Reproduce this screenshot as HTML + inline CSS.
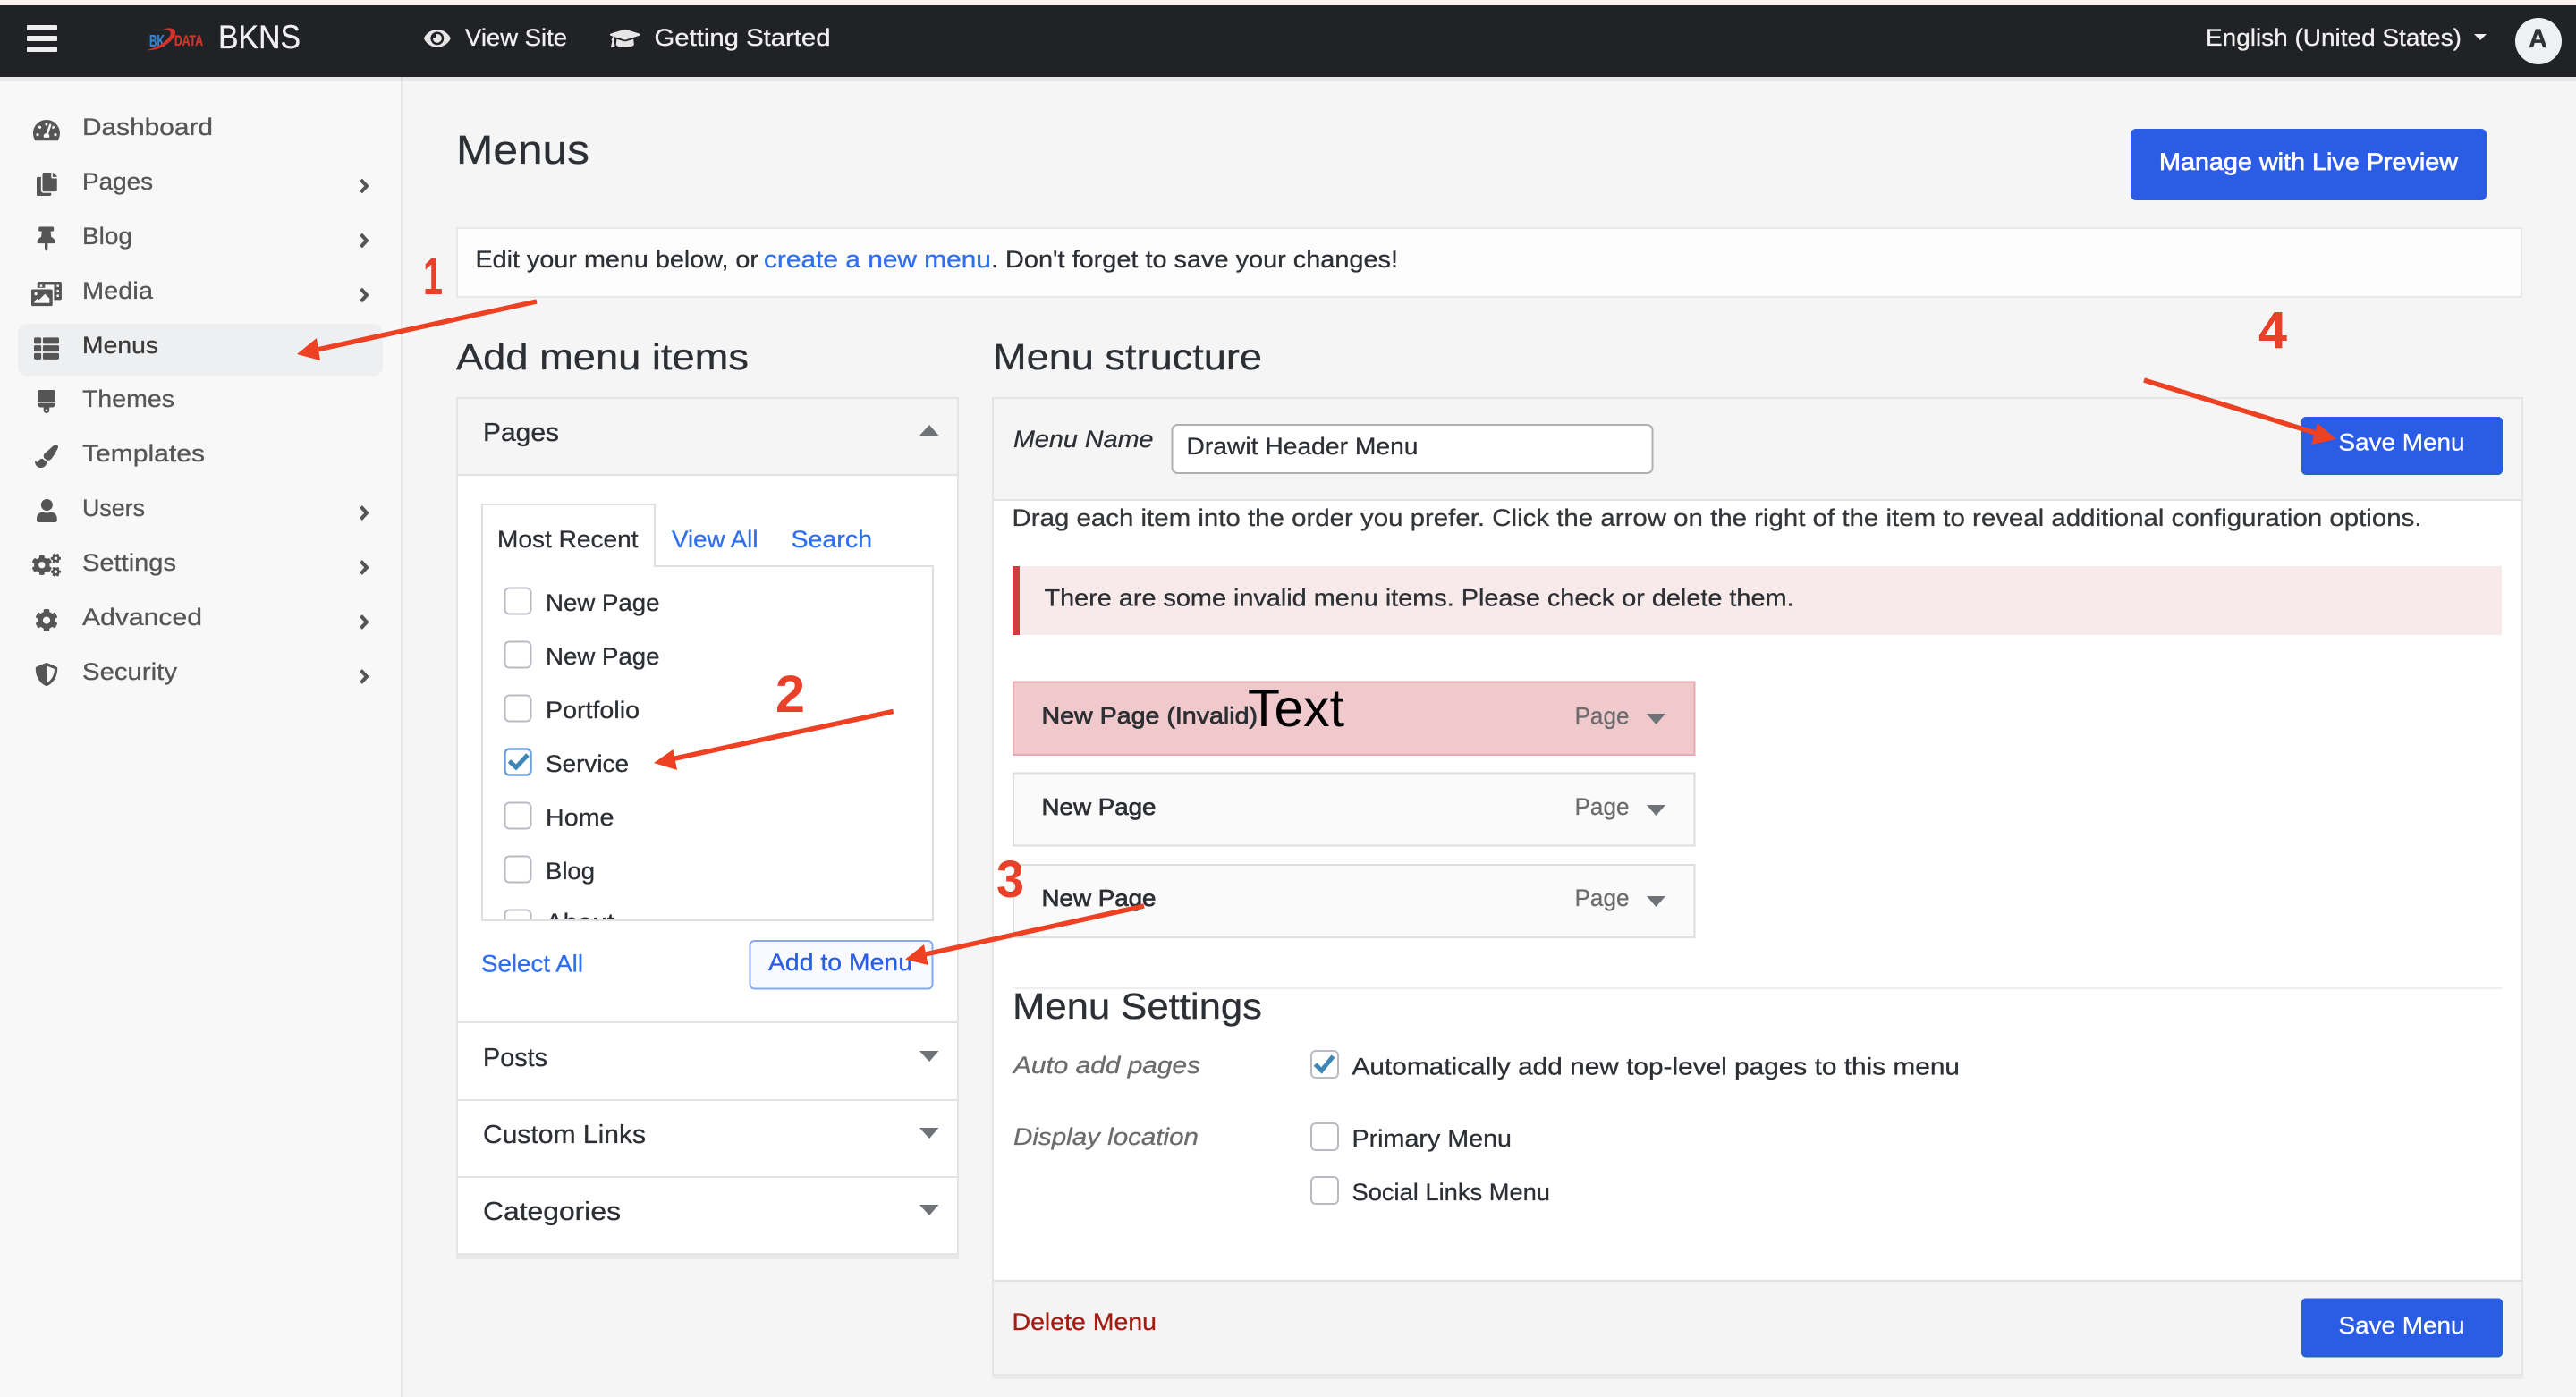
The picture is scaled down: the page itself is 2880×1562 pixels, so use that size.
<!DOCTYPE html>
<html lang="en"><head><meta charset="utf-8"><title>Menus</title>
<style>
html,body{margin:0;padding:0;background:#f5f5f5;overflow:hidden}
svg{display:block}
text{font-family:"Liberation Sans",sans-serif;font-size:27px;fill:#2c2f33;stroke:#2c2f33;stroke-width:.3}
.s{fill:#565656;stroke:#565656}
.w{fill:#f0f0f0;stroke:#f0f0f0}
.l{fill:#2f6ff0;stroke:#2f6ff0}
.h{font-size:29px}
.i{font-style:italic}
.g{fill:#6c6c6c;stroke:#6c6c6c}
.b{stroke-width:.7;font-size:26px}
.v{fill:#fff;stroke:#fff}
.r{font-family:"Liberation Sans",sans-serif;font-weight:bold;fill:#e9402a;stroke:none}
</style></head><body>
<svg xmlns="http://www.w3.org/2000/svg" width="2880" height="1562" viewBox="0 0 2880 1562">
<rect width="2880" height="1562" fill="#f5f5f5"/>
<rect x="0" y="0" width="449" height="1562" fill="#f8f8f8"/>
<rect x="448" y="0" width="2" height="1562" fill="#e6e6e6"/>
<!-- top bar -->
<rect width="2880" height="6" fill="#faf1f0"/>
<rect y="86" width="2880" height="5" fill="#000" opacity=".06"/>
<rect y="6" width="2880" height="80" fill="#202225"/>
<rect x="30" y="28" width="34" height="6" rx="1" fill="#eee"/>
<rect x="30" y="40" width="34" height="6" rx="1" fill="#eee"/>
<rect x="30" y="52" width="34" height="6" rx="1" fill="#eee"/>
<!-- logo -->
<text x="167" y="52" textLength="17" lengthAdjust="spacingAndGlyphs" style="font-size:18px;fill:#3a80c8;stroke:#3a80c8;font-weight:bold">BK</text>
<text x="195" y="51" textLength="32" lengthAdjust="spacingAndGlyphs" style="font-size:17px;fill:#d8322a;stroke:#d8322a;font-weight:bold">DATA</text>
<path d="M164 56C178 58 198 44 196 35C194 30 186 31 182 33C190 32 192 36 190 40C186 47 174 54 164 56Z" fill="#d8322a"/>
<text x="244" y="54" textLength="92" lengthAdjust="spacingAndGlyphs" class="w" style="font-size:37px">BKNS</text>
<path transform="translate(474 29.7) scale(.0515)" fill="#e6e6e6" d="M572.52 241.4C518.29 135.59 410.93 64 288 64S57.68 135.64 3.48 241.4a32.35 32.35 0 0 0 0 29.19C57.71 376.41 165.07 448 288 448s230.32-71.64 284.52-177.41a32.35 32.35 0 0 0 0-29.19zM288 400a144 144 0 1 1 144-144 143.93 143.93 0 0 1-144 144zm0-240a95.31 95.31 0 0 0-25.31 3.79 47.85 47.85 0 0 1-66.9 66.9A95.78 95.78 0 1 0 288 160z"/>
<text x="520" y="51" textLength="114" lengthAdjust="spacingAndGlyphs" class="w">View Site</text>
<path transform="translate(682 29.5) scale(.0525)" fill="#e6e6e6" d="M622.34 153.2L343.4 67.5c-15.2-4.67-31.6-4.67-46.79 0L17.66 153.2c-23.54 7.23-23.54 38.36 0 45.59l48.63 14.94c-10.67 13.19-17.23 29.28-17.88 46.9C38.78 266.15 32 276.11 32 288c0 10.78 5.68 19.85 13.86 25.65L20.33 428.53C18.11 438.52 25.71 448 35.94 448h56.11c10.24 0 17.84-9.48 15.62-19.47L82.14 313.65C90.32 307.85 96 298.78 96 288c0-11.57-6.47-21.25-15.66-26.87.76-15.02 8.44-28.3 20.69-36.72L296.6 284.5c9.06 2.78 26.44 6.25 46.79 0l278.95-85.7c23.55-7.24 23.55-38.36 0-45.6zM352.79 315.09c-28.53 8.76-52.84 3.92-65.59 0l-145.02-44.55L128 384c0 35.35 85.96 64 192 64s192-28.65 192-64l-14.18-113.47-145.03 44.56z"/>
<text x="731.5" y="51" textLength="197" lengthAdjust="spacingAndGlyphs" class="w">Getting Started</text>
<text x="2466" y="51" textLength="286" lengthAdjust="spacingAndGlyphs" class="w">English (United States)</text>
<polygon points="2766,38 2780,38 2773,45" fill="#eee"/>
<circle cx="2838" cy="46" r="26" fill="#eef0f2"/>
<text x="2827" y="53" textLength="21" lengthAdjust="spacingAndGlyphs" style="font-size:30px;font-weight:bold;fill:#2f3235">A</text>
<!-- sidebar -->
<rect x="20" y="362" width="408" height="58" rx="10" fill="#eeeff1"/>
<g fill="#555">
<path transform="translate(37 132.3) scale(.052)" d="M288 32C128.94 32 0 160.94 0 320c0 52.8 14.25 102.26 39.06 144.8 5.61 9.62 16.3 15.2 27.44 15.2h443c11.14 0 21.83-5.58 27.44-15.2C561.75 422.26 576 372.8 576 320c0-159.06-128.94-288-288-288zm0 64c14.71 0 26.58 10.13 30.32 23.65-1.11 2.26-2.64 4.23-3.45 6.67l-9.22 27.67c-5.13 3.49-10.97 6.01-17.64 6.01-17.67 0-32-14.33-32-32S270.33 96 288 96zM96 384c-17.67 0-32-14.33-32-32s14.33-32 32-32 32 14.33 32 32-14.33 32-32 32zm48-160c-17.67 0-32-14.33-32-32s14.33-32 32-32 32 14.33 32 32-14.33 32-32 32zm246.77-72.41l-61.33 184C343.13 347.33 352 364.54 352 384c0 11.72-3.38 22.55-8.88 32H232.88c-5.5-9.45-8.88-20.28-8.88-32 0-33.94 26.5-61.43 59.9-63.59l61.34-184.01c4.17-12.56 17.73-19.45 30.36-15.17 12.57 4.19 19.35 17.79 15.17 30.36zm14.66 57.2l15.52-46.55c3.47-1.29 7.13-2.23 11.05-2.23 17.67 0 32 14.33 32 32s-14.33 32-32 32c-11.38-.01-20.89-6.28-26.57-15.22zM480 384c-17.67 0-32-14.33-32-32s14.33-32 32-32 32 14.33 32 32-14.33 32-32 32z"/>
<path transform="translate(41 193) scale(.0508)" d="M320 448v40c0 13.255-10.745 24-24 24H24c-13.255 0-24-10.745-24-24V120c0-13.255 10.745-24 24-24h72v296c0 30.879 25.121 56 56 56h168zm0-344V0H152c-13.255 0-24 10.745-24 24v368c0 13.255 10.745 24 24 24h272c13.255 0 24-10.745 24-24V128H344c-13.2 0-24-10.8-24-24zm120.971-31.029L375.029 7.029A24 24 0 0 0 358.059 0H352v96h96v-6.059a24 24 0 0 0-7.029-16.97z"/>
<path transform="translate(41.5 253.5) scale(.053)" d="M298.028 214.267L285.793 96H328c13.255 0 24-10.745 24-24V24c0-13.255-10.745-24-24-24H56C42.745 0 32 10.745 32 24v48c0 13.255 10.745 24 24 24h42.207L85.972 214.267C37.465 236.82 0 277.261 0 328c0 13.255 10.745 24 24 24h136v104.007c0 1.242.289 2.467.845 3.578l24 48c2.941 5.882 11.364 5.893 14.311 0l24-48a8.008 8.008 0 0 0 .845-3.578V352h136c13.255 0 24-10.745 24-24-.001-51.183-37.983-91.42-85.973-113.733z"/>
<path transform="translate(35 315) scale(.053)" d="M608 0H160a32 32 0 0 0-32 32v96h160V64h192v320h128a32 32 0 0 0 32-32V32a32 32 0 0 0-32-32zM232 103a9 9 0 0 1-9 9h-30a9 9 0 0 1-9-9V73a9 9 0 0 1 9-9h30a9 9 0 0 1 9 9zm352 208a9 9 0 0 1-9 9h-30a9 9 0 0 1-9-9v-30a9 9 0 0 1 9-9h30a9 9 0 0 1 9 9zm0-104a9 9 0 0 1-9 9h-30a9 9 0 0 1-9-9v-30a9 9 0 0 1 9-9h30a9 9 0 0 1 9 9zm0-104a9 9 0 0 1-9 9h-30a9 9 0 0 1-9-9V73a9 9 0 0 1 9-9h30a9 9 0 0 1 9 9zm-168 57H32a32 32 0 0 0-32 32v288a32 32 0 0 0 32 32h384a32 32 0 0 0 32-32V192a32 32 0 0 0-32-32zM96 224a32 32 0 1 1-32 32 32 32 0 0 1 32-32zm288 224H64v-32l64-64 32 32 128-128 96 96z"/>
<path transform="translate(38 375.6) scale(.0547)" d="M149.333 216v80c0 13.255-10.745 24-24 24H24c-13.255 0-24-10.745-24-24v-80c0-13.255 10.745-24 24-24h101.333c13.255 0 24 10.745 24 24zM0 376v80c0 13.255 10.745 24 24 24h101.333c13.255 0 24-10.745 24-24v-80c0-13.255-10.745-24-24-24H24c-13.255 0-24 10.745-24 24zM125.333 32H24C10.745 32 0 42.745 0 56v80c0 13.255 10.745 24 24 24h101.333c13.255 0 24-10.745 24-24V56c0-13.255-10.745-24-24-24zm80 448H488c13.255 0 24-10.745 24-24v-80c0-13.255-10.745-24-24-24H205.333c-13.255 0-24 10.745-24 24v80c0 13.255 10.745 24 24 24zm-24-424v80c0 13.255 10.745 24 24 24H488c13.255 0 24-10.745 24-24V56c0-13.255-10.745-24-24-24H205.333c-13.255 0-24 10.745-24 24zm24 264H488c13.255 0 24-10.745 24-24v-80c0-13.255-10.745-24-24-24H205.333c-13.255 0-24 10.745-24 24v80c0 13.255 10.745 24 24 24z"/>
<path transform="translate(42.2 436) scale(.0508)" d="M352 0H32C14.33 0 0 14.33 0 32v224h384V32c0-17.67-14.33-32-32-32zM0 320c0 35.35 28.66 64 64 64h64v64c0 35.35 28.66 64 64 64s64-28.65 64-64v-64h64c35.34 0 64-28.65 64-64v-32H0v32zm192 104c13.25 0 24 10.74 24 24 0 13.25-10.75 24-24 24s-24-10.75-24-24c0-13.26 10.75-24 24-24z"/>
<path transform="translate(39 497) scale(.0508)" d="M167.02 309.34c-40.12 2.58-76.53 17.86-97.19 72.3-2.35 6.21-8 9.98-14.59 9.98-11.11 0-45.46-27.67-55.25-34.35C0 439.62 37.93 512 128 512c75.86 0 128-43.77 128-120.19 0-3.11-.65-6.08-.97-9.13l-88.01-73.34zM457.89 0c-15.16 0-29.37 6.71-40.21 16.45C213.27 199.05 192 203.34 192 257.09c0 13.7 3.25 26.76 8.73 38.7l63.82 53.18c7.21 1.8 14.64 3.03 22.39 3.03 62.11 0 98.11-45.47 211.16-256.46 7.38-14.35 13.9-29.85 13.9-45.99C512 20.64 486 0 457.89 0z"/>
<path transform="translate(41 558) scale(.0508)" d="M224 256c70.7 0 128-57.3 128-128S294.7 0 224 0 96 57.3 96 128s57.3 128 128 128zm89.6 32h-16.7c-22.2 10.2-46.9 16-72.9 16s-50.6-5.8-72.9-16h-16.7C60.2 288 0 348.2 0 422.4V464c0 26.5 21.5 48 48 48h352c26.5 0 48-21.5 48-48v-41.6c0-74.2-60.2-134.4-134.4-134.4z"/>
<path transform="translate(36 619) scale(.05)" d="M512.1 191l-8.2 14.3c-3 5.3-9.4 7.5-15.1 5.4-11.8-4.4-22.6-10.7-32.1-18.6-4.6-3.8-5.8-10.5-2.8-15.7l8.2-14.3c-6.9-8-12.3-17.3-15.9-27.4h-16.5c-6 0-11.2-4.3-12.2-10.3-2-12-2.1-24.6 0-37.1 1-6 6.2-10.4 12.2-10.4h16.5c3.6-10.1 9-19.4 15.9-27.4l-8.2-14.3c-3-5.2-1.9-11.9 2.8-15.7 9.5-7.9 20.4-14.2 32.1-18.6 5.7-2.1 12.1.1 15.1 5.4l8.2 14.3c10.5-1.9 21.2-1.9 31.7 0L552 6.3c3-5.3 9.4-7.5 15.1-5.4 11.8 4.4 22.6 10.7 32.1 18.6 4.6 3.8 5.8 10.5 2.8 15.7l-8.2 14.3c6.9 8 12.3 17.3 15.9 27.4h16.5c6 0 11.2 4.3 12.2 10.3 2 12 2.1 24.6 0 37.1-1 6-6.2 10.4-12.2 10.4h-16.5c-3.6 10.1-9 19.4-15.9 27.4l8.2 14.3c3 5.2 1.9 11.9-2.8 15.7-9.5 7.9-20.4 14.2-32.1 18.6-5.7 2.1-12.1-.1-15.1-5.4l-8.2-14.3c-10.4 1.9-21.2 1.9-31.7 0zm-10.5-58.8c38.5 29.6 82.4-14.3 52.8-52.8-38.5-29.7-82.4 14.3-52.8 52.8zM386.3 286.1l33.7 16.8c10.1 5.8 14.5 18.1 10.5 29.1-8.9 24.2-26.4 46.4-42.6 65.8-7.4 8.9-20.2 11.1-30.3 5.3l-29.1-16.8c-16 13.7-34.6 24.6-54.9 31.7v33.6c0 11.6-8.3 21.6-19.7 23.6-24.6 4.2-50.4 4.4-75.9 0-11.5-2-20-11.9-20-23.6V418c-20.3-7.2-38.9-18-54.9-31.7L74 403c-10 5.8-22.9 3.6-30.3-5.3-16.2-19.4-33.3-41.6-42.2-65.7-4-10.9.4-23.2 10.5-29.1l33.3-16.8c-3.9-20.9-3.9-42.4 0-63.4L12 205.8c-10.1-5.8-14.6-18.1-10.5-29 8.9-24.2 26-46.4 42.2-65.8 7.4-8.9 20.2-11.1 30.3-5.3l29.1 16.8c16-13.7 34.6-24.6 54.9-31.7V57.1c0-11.5 8.2-21.5 19.6-23.5 24.6-4.2 50.5-4.4 76-.1 11.5 2 20 11.9 20 23.6v33.6c20.3 7.2 38.9 18 54.9 31.7l29.1-16.8c10-5.8 22.9-3.6 30.3 5.3 16.2 19.4 33.2 41.6 42.1 65.8 4 10.9.1 23.2-10 29.1l-33.7 16.8c3.9 21 3.9 42.5 0 63.5zm-117.6 21.1c59.2-77-28.7-164.9-105.7-105.7-59.2 77 28.7 164.9 105.7 105.7zm243.4 182.7l-8.2 14.3c-3 5.3-9.4 7.5-15.1 5.4-11.8-4.4-22.6-10.7-32.1-18.6-4.6-3.8-5.8-10.5-2.8-15.7l8.2-14.3c-6.9-8-12.3-17.3-15.9-27.4h-16.5c-6 0-11.2-4.3-12.2-10.3-2-12-2.1-24.6 0-37.1 1-6 6.2-10.4 12.2-10.4h16.5c3.6-10.1 9-19.4 15.9-27.4l-8.2-14.3c-3-5.2-1.9-11.9 2.8-15.7 9.5-7.9 20.4-14.2 32.1-18.6 5.7-2.1 12.1.1 15.1 5.4l8.2 14.3c10.5-1.9 21.2-1.9 31.7 0l8.2-14.3c3-5.3 9.4-7.5 15.1-5.4 11.8 4.4 22.6 10.7 32.1 18.6 4.6 3.8 5.8 10.5 2.8 15.7l-8.2 14.3c6.9 8 12.3 17.3 15.9 27.4h16.5c6 0 11.2 4.3 12.2 10.3 2 12 2.1 24.6 0 37.1-1 6-6.2 10.4-12.2 10.4h-16.5c-3.6 10.1-9 19.4-15.9 27.4l8.2 14.3c3 5.2 1.9 11.9-2.8 15.7-9.5 7.9-20.4 14.2-32.1 18.6-5.7 2.1-12.1-.1-15.1-5.4l-8.2-14.3c-10.4 1.9-21.2 1.9-31.7 0zM501.6 431c38.5 29.6 82.4-14.3 52.8-52.8-38.5-29.6-82.4 14.3-52.8 52.8z"/>
<path transform="translate(39 680.5) scale(.0508)" d="M487.4 315.7l-42.6-24.6c4.3-23.2 4.3-47 0-70.2l42.6-24.6c4.9-2.8 7.1-8.6 5.5-14-11.1-35.6-30-67.8-54.7-94.6-3.8-4.1-10-5.1-14.8-2.3L380.8 110c-17.9-15.4-38.5-27.3-60.8-35.1V25.8c0-5.6-3.9-10.5-9.4-11.7-36.7-8.2-74.3-7.8-109.2 0-5.5 1.2-9.4 6.1-9.4 11.7V75c-22.2 7.9-42.8 19.8-60.8 35.1L88.7 85.5c-4.9-2.8-11-1.9-14.8 2.3-24.7 26.7-43.6 58.9-54.7 94.6-1.7 5.4.6 11.2 5.5 14L67.3 221c-4.3 23.2-4.3 47 0 70.2l-42.6 24.6c-4.9 2.8-7.1 8.6-5.5 14 11.1 35.6 30 67.8 54.7 94.6 3.8 4.1 10 5.1 14.8 2.3l42.6-24.6c17.9 15.4 38.5 27.3 60.8 35.1v49.2c0 5.6 3.9 10.5 9.4 11.7 36.7 8.2 74.3 7.8 109.2 0 5.5-1.2 9.4-6.1 9.4-11.7v-49.2c22.2-7.9 42.8-19.8 60.8-35.1l42.6 24.6c4.9 2.8 11 1.9 14.8-2.3 24.7-26.7 43.6-58.9 54.7-94.6 1.5-5.5-.7-11.3-5.6-14.1zM256 336c-44.1 0-80-35.9-80-80s35.9-80 80-80 80 35.9 80 80-35.9 80-80 80z"/>
<path transform="translate(39 741) scale(.0508)" d="M466.5 83.7l-192-80a48.15 48.15 0 0 0-36.9 0l-192 80C27.7 91.1 16 108.6 16 128c0 198.5 114.5 335.7 221.5 380.3 11.8 4.9 25.1 4.9 36.9 0C360.1 472.6 496 349.3 496 128c0-19.4-11.7-36.9-29.5-44.3zM256.1 446.3l-.1-381 175.9 73.3c-3.3 151.4-82.1 261.1-175.8 307.7z"/>
</g>
<text x="92" y="151" textLength="146" lengthAdjust="spacingAndGlyphs" class="s">Dashboard</text>
<text x="92" y="212" textLength="79" lengthAdjust="spacingAndGlyphs" class="s">Pages</text>
<text x="92" y="273" textLength="56" lengthAdjust="spacingAndGlyphs" class="s">Blog</text>
<text x="92" y="334" textLength="79" lengthAdjust="spacingAndGlyphs" class="s">Media</text>
<text x="92" y="395" textLength="85" lengthAdjust="spacingAndGlyphs" style="fill:#3a3a3a;stroke:#3a3a3a">Menus</text>
<text x="92" y="455" textLength="103" lengthAdjust="spacingAndGlyphs" class="s">Themes</text>
<text x="92" y="516" textLength="137" lengthAdjust="spacingAndGlyphs" class="s">Templates</text>
<text x="92" y="577" textLength="70" lengthAdjust="spacingAndGlyphs" class="s">Users</text>
<text x="92" y="638" textLength="105" lengthAdjust="spacingAndGlyphs" class="s">Settings</text>
<text x="92" y="699" textLength="134" lengthAdjust="spacingAndGlyphs" class="s">Advanced</text>
<text x="92" y="760" textLength="106" lengthAdjust="spacingAndGlyphs" class="s">Security</text>
<g fill="none" stroke="#555" stroke-width="4">
<polyline points="403.5,201 410,208 403.5,215"/>
<polyline points="403.5,262 410,269 403.5,276"/>
<polyline points="403.5,323 410,330 403.5,337"/>
<polyline points="403.5,566.5 410,573.5 403.5,580.5"/>
<polyline points="403.5,627.5 410,634.5 403.5,641.5"/>
<polyline points="403.5,688.5 410,695.5 403.5,702.5"/>
<polyline points="403.5,749.5 410,756.5 403.5,763.5"/>
</g>
<!-- heading -->
<text x="510" y="183" textLength="149" lengthAdjust="spacingAndGlyphs" style="font-size:45px">Menus</text>
<rect x="2382" y="144" width="398" height="80" rx="6" fill="#2b5ce6"/>
<text x="2414" y="190" textLength="334" lengthAdjust="spacingAndGlyphs" class="v" style="stroke-width:.7">Manage with Live Preview</text>
<!-- notice -->
<rect x="511" y="255" width="2308" height="77" fill="#fcfcfc" stroke="#e8e8e8" stroke-width="2"/>
<text x="531.5" y="299" textLength="316.5" lengthAdjust="spacingAndGlyphs">Edit your menu below, or</text>
<text x="854" y="299" textLength="254" lengthAdjust="spacingAndGlyphs" class="l">create a new menu</text>
<text x="1108" y="299" textLength="455" lengthAdjust="spacingAndGlyphs">. Don't forget to save your changes!</text>
<text x="510" y="413" textLength="327" lengthAdjust="spacingAndGlyphs" style="font-size:41px">Add menu items</text>
<text x="1110" y="413" textLength="301" lengthAdjust="spacingAndGlyphs" style="font-size:41px">Menu structure</text>
<!-- left panel -->
<rect x="510" y="1402" width="562" height="6" fill="#000" opacity=".05"/>
<rect x="511" y="445" width="560" height="957" fill="#fff" stroke="#e4e4e4" stroke-width="2"/>
<rect x="512" y="446" width="558" height="84" fill="#f5f5f5"/>
<rect x="512" y="530" width="558" height="2" fill="#e4e4e4"/>
<text x="540" y="493" textLength="85" lengthAdjust="spacingAndGlyphs" class="h">Pages</text>
<polygon points="1028,487 1049.5,487 1039,475" fill="#6f7378"/>
<!-- tabs box -->
<rect x="539" y="633" width="504" height="396" fill="#fff" stroke="#e0e0e0" stroke-width="2"/>
<path d="M539 634V564H732V634" fill="#fff" stroke="#e0e0e0" stroke-width="2"/>
<rect x="540" y="630" width="191" height="6" fill="#fff"/>
<text x="556" y="612" textLength="157.5" lengthAdjust="spacingAndGlyphs">Most Recent</text>
<text x="751" y="612" textLength="96.5" lengthAdjust="spacingAndGlyphs" class="l">View All</text>
<text x="884.5" y="612" textLength="90.5" lengthAdjust="spacingAndGlyphs" class="l">Search</text>
<g fill="#fff" stroke="#b8bcc2" stroke-width="2">
<rect x="564.5" y="657.5" width="29" height="29" rx="5"/>
<rect x="564.5" y="717.5" width="29" height="29" rx="5"/>
<rect x="564.5" y="777.5" width="29" height="29" rx="5"/>
<rect x="564.5" y="897.5" width="29" height="29" rx="5"/>
<rect x="564.5" y="957.5" width="29" height="29" rx="5"/>
</g>
<rect x="564.5" y="837.5" width="29" height="29" rx="5" fill="#fff" stroke="#6fa0dc" stroke-width="2.5"/>
<polyline points="569.5,851 577,858 590,844" fill="none" stroke="#3f86b8" stroke-width="5"/>
<text x="610" y="683" textLength="127.5" lengthAdjust="spacingAndGlyphs">New Page</text>
<text x="610" y="743" textLength="127.5" lengthAdjust="spacingAndGlyphs">New Page</text>
<text x="610" y="803" textLength="105" lengthAdjust="spacingAndGlyphs">Portfolio</text>
<text x="610" y="863" textLength="93" lengthAdjust="spacingAndGlyphs">Service</text>
<text x="610" y="923" textLength="76.5" lengthAdjust="spacingAndGlyphs">Home</text>
<text x="610" y="983" textLength="55" lengthAdjust="spacingAndGlyphs">Blog</text>
<svg x="540" y="1000" width="502" height="28" viewBox="540 1000 502 28">
<rect x="564.5" y="1017.5" width="29" height="29" rx="5" fill="#fff" stroke="#b8bcc2" stroke-width="2"/>
<text x="610" y="1040" textLength="77" lengthAdjust="spacingAndGlyphs">About</text>
</svg>
<text x="538" y="1086.5" textLength="114" lengthAdjust="spacingAndGlyphs" class="l">Select All</text>
<rect x="838.5" y="1052" width="204" height="53.5" rx="5" fill="#f8faff" stroke="#86a8ee" stroke-width="2"/>
<text x="859" y="1085" textLength="161" lengthAdjust="spacingAndGlyphs" style="fill:#2b5ce6;stroke:#2b5ce6">Add to Menu</text>
<rect x="512" y="1142" width="558" height="2" fill="#e2e2e2"/>
<rect x="512" y="1229" width="558" height="2" fill="#e2e2e2"/>
<rect x="512" y="1315" width="558" height="2" fill="#e2e2e2"/>
<text x="540" y="1192" textLength="72" lengthAdjust="spacingAndGlyphs" class="h">Posts</text>
<text x="540" y="1278" textLength="182" lengthAdjust="spacingAndGlyphs" class="h">Custom Links</text>
<text x="540" y="1364" textLength="154" lengthAdjust="spacingAndGlyphs" class="h">Categories</text>
<g fill="#6f7378">
<polygon points="1028,1175 1049.5,1175 1039,1187"/>
<polygon points="1028,1261 1049.5,1261 1039,1273"/>
<polygon points="1028,1347 1049.5,1347 1039,1359"/>
</g>
<!-- right panel -->
<rect x="1109" y="1537" width="1712" height="5" fill="#000" opacity=".04"/>
<rect x="1110" y="445" width="1710" height="1092" fill="#fff" stroke="#e6e6e6" stroke-width="2"/>
<rect x="1111" y="446" width="1708" height="112" fill="#f5f5f5"/>
<rect x="1111" y="558" width="1708" height="2" fill="#e2e2e2"/>
<text x="1133" y="500" textLength="156.5" lengthAdjust="spacingAndGlyphs" class="i">Menu Name</text>
<rect x="1310.5" y="475" width="537" height="54" rx="6" fill="#fff" stroke="#b0b0b0" stroke-width="2"/>
<text x="1326.5" y="508" textLength="259" lengthAdjust="spacingAndGlyphs">Drawit Header Menu</text>
<rect x="2573" y="466" width="225" height="65" rx="5" fill="#1f6a9a"/>
<rect x="2573" y="466" width="225" height="63.5" rx="5" fill="#2b5ce6"/>
<text x="2614.5" y="503.5" textLength="141" lengthAdjust="spacingAndGlyphs" class="v">Save Menu</text>
<text x="1131.5" y="588" textLength="1576" lengthAdjust="spacingAndGlyphs" style="fill:#34373a;stroke:#34373a">Drag each item into the order you prefer. Click the arrow on the right of the item to reveal additional configuration options.</text>
<rect x="1132" y="633" width="1665" height="77" fill="#f8e9ea"/>
<rect x="1132" y="633" width="8" height="77" fill="#cf3e3e"/>
<text x="1167.5" y="677.5" textLength="838" lengthAdjust="spacingAndGlyphs">There are some invalid menu items. Please check or delete them.</text>
<rect x="1133" y="762.5" width="761.5" height="81.5" fill="#f0c9cd" stroke="#e8aab0" stroke-width="2"/>
<rect x="1133" y="864.5" width="761.5" height="81" fill="#fafafa" stroke="#dedede" stroke-width="2"/>
<rect x="1133" y="967" width="761.5" height="81" fill="#fafafa" stroke="#dedede" stroke-width="2"/>
<text x="1164.5" y="809" textLength="241.5" lengthAdjust="spacingAndGlyphs" class="b">New Page (Invalid)</text>
<text x="1395" y="812" textLength="108" lengthAdjust="spacingAndGlyphs" style="font-size:59px;fill:#000;stroke:none">Text</text>
<text x="1164.5" y="911" textLength="128" lengthAdjust="spacingAndGlyphs" class="b">New Page</text>
<text x="1164.5" y="1013" textLength="128" lengthAdjust="spacingAndGlyphs" class="b">New Page</text>
<text x="1760.5" y="809.5" textLength="61" lengthAdjust="spacingAndGlyphs" class="g">Page</text>
<text x="1760.5" y="911" textLength="61" lengthAdjust="spacingAndGlyphs" class="g">Page</text>
<text x="1760.5" y="1013" textLength="61" lengthAdjust="spacingAndGlyphs" class="g">Page</text>
<g fill="#6f7378">
<polygon points="1841,798 1862,798 1851.5,810"/>
<polygon points="1841,900 1862,900 1851.5,912"/>
<polygon points="1841,1002 1862,1002 1851.5,1014"/>
</g>
<rect x="1132" y="1104" width="1665" height="2" fill="#eeeeee"/>
<text x="1132" y="1139" textLength="279" lengthAdjust="spacingAndGlyphs" style="font-size:41px">Menu Settings</text>
<text x="1133" y="1200" textLength="209" lengthAdjust="spacingAndGlyphs" class="i g">Auto add pages</text>
<text x="1133" y="1280" textLength="207" lengthAdjust="spacingAndGlyphs" class="i g">Display location</text>
<g fill="#fff" stroke="#b8bcc2" stroke-width="2">
<rect x="1466" y="1175" width="30" height="30" rx="5"/>
<rect x="1466" y="1256" width="30" height="30" rx="5"/>
<rect x="1466" y="1316" width="30" height="30" rx="5"/>
</g>
<polyline points="1470.5,1190 1477.5,1197 1490.5,1181" fill="none" stroke="#3f86b8" stroke-width="5"/>
<text x="1511.5" y="1201.5" textLength="679.5" lengthAdjust="spacingAndGlyphs">Automatically add new top-level pages to this menu</text>
<text x="1511.5" y="1282" textLength="178.5" lengthAdjust="spacingAndGlyphs">Primary Menu</text>
<text x="1511.5" y="1342" textLength="221.5" lengthAdjust="spacingAndGlyphs">Social Links Menu</text>
<rect x="1111" y="1431" width="1708" height="105" fill="#f4f4f4"/>
<rect x="1111" y="1431" width="1708" height="2" fill="#dfdfdf"/>
<text x="1131.5" y="1487" textLength="161.5" lengthAdjust="spacingAndGlyphs" style="fill:#a51b10;stroke:#a51b10">Delete Menu</text>
<rect x="2573" y="1451.5" width="225" height="66" rx="5" fill="#1f6a9a"/>
<rect x="2573" y="1451.5" width="225" height="64.5" rx="5" fill="#2b5ce6"/>
<text x="2614.5" y="1491" textLength="141" lengthAdjust="spacingAndGlyphs" class="v">Save Menu</text>
<!-- annotations -->
<g stroke="#ee4023" stroke-width="5.5" fill="none">
<line x1="600" y1="337" x2="350" y2="392"/>
<line x1="998.7" y1="795.4" x2="750" y2="849"/>
<line x1="1279" y1="1013" x2="1030" y2="1068"/>
<line x1="2397" y1="425" x2="2592" y2="485"/>
</g>
<g fill="#ee4023">
<polygon points="332,396 354,378 358,403"/>
<polygon points="731,853 752.5,838 757,861"/>
<polygon points="1012,1072.6 1033,1056 1037.7,1079"/>
<polygon points="2612,491 2591,473 2584,497"/>
</g>
<text x="473" y="329" textLength="22" lengthAdjust="spacingAndGlyphs" class="r" style="font-size:58px">1</text>
<text x="867" y="796" textLength="33" lengthAdjust="spacingAndGlyphs" class="r" style="font-size:58px">2</text>
<text x="1114" y="1003" textLength="31" lengthAdjust="spacingAndGlyphs" class="r" style="font-size:58px">3</text>
<text x="2525" y="389" textLength="32" lengthAdjust="spacingAndGlyphs" class="r" style="font-size:58px">4</text>
</svg>
</body></html>
